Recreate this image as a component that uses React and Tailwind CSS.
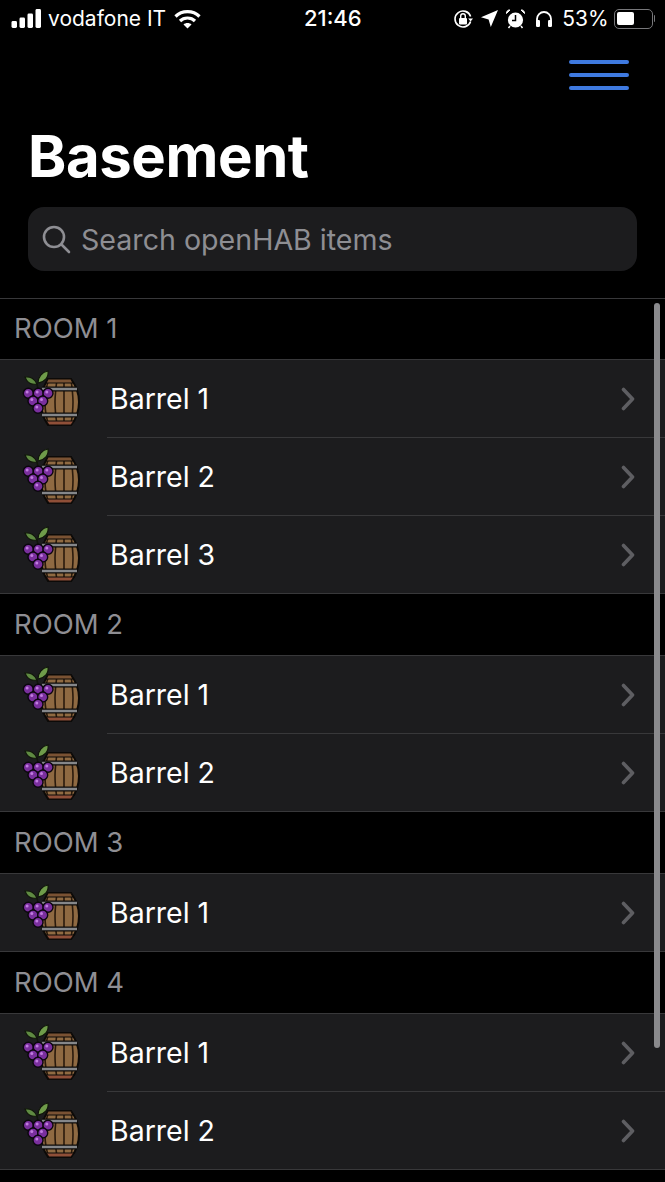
import React from "react";

const F = { fontFamily: "Inter, 'Liberation Sans', sans-serif" };

function BarrelIcon() {
  const grapes = [[7.3,24.3],[17.3,24.3],[27,24.3],[12,32],[21.7,32],[17,39.3]];
  return (
    <svg width="60" height="60" viewBox="0 0 60 60" className="shrink-0">
      <path d="M27 10 L50 10 C56 18 58 26 58 33 C58 41 56 49 50 56 L27 56 C22 49 20 41 20 33 C20 26 22 18 27 10 Z" fill="#8f6a42" stroke="#0c0a08" strokeWidth="2" />
      <path d="M28 10 C25 18 24 26 24 33 C24 41 25 49 28 56 M36 10 C35 18 34 26 34 33 C34 41 35 49 36 56 M43 10 C43 18 43 26 43 33 C43 41 43 49 43 56 M50 10 C51 18 52 26 52 33 C52 41 51 49 50 56" fill="none" stroke="#2a1a0c" strokeWidth="1.6" />
      <path d="M21 20 L56 20" stroke="#0c0a08" strokeWidth="5" />
      <path d="M21 20 L56 20" stroke="#85878a" strokeWidth="2.6" />
      <path d="M21 46 L56 46" stroke="#0c0a08" strokeWidth="5" />
      <path d="M21 46 L56 46" stroke="#85878a" strokeWidth="2.6" />
      <path d="M27 10 L50 10 L52 14 L25 14 Z" fill="#7a5233" stroke="#0c0a08" strokeWidth="1.2" />
      <path d="M25 52 L53 52 L50 56 L28 56 Z" fill="#8f4f38" stroke="#0c0a08" strokeWidth="1.2" />
      <path d="M4 8 C9 7 14 10 16 15 C11 16 6 14 4 8 Z" fill="#5f8a42" stroke="#10160a" strokeWidth="1.2" />
      <path d="M17 14 C17 8 21 3 27 2 C28 8 24 13 17 14 Z" fill="#6f9c4a" stroke="#10160a" strokeWidth="1.2" />
      <path d="M16 15 L17 20" stroke="#10160a" strokeWidth="1.5" />
      {grapes.map(([x, y], i) => (
        <g key={i}>
          <circle cx={x} cy={y} r="5" fill="#7a2f9e" stroke="#0b060e" strokeWidth="1.4" />
          <circle cx={x - 1.2} cy={y - 1.4} r="1.5" fill="#c07be0" />
        </g>
      ))}
    </svg>
  );
}

function Row({ name, last }) {
  return (
    <div className={`flex h-[78px] items-center bg-[#1c1c1e] pl-[21px] ${last ? "border-b border-[#38383a]" : ""}`}>
      <BarrelIcon />
      <div className={`ml-[26px] flex h-full flex-1 items-center justify-between pr-[30px] ${last ? "" : "border-b border-[#38383a]"}`}>
        <span className="ml-[3px] pt-[2px] text-[28.5px] leading-none text-white">{name}</span>
        <svg width="14" height="24" viewBox="0 0 14 24" fill="none">
          <path d="M2.5 2.5 L11.5 12 L2.5 21.5" stroke="#5e5e62" strokeWidth="3.6" strokeLinecap="round" strokeLinejoin="round" />
        </svg>
      </div>
    </div>
  );
}

function Section({ title, items, first }) {
  return (
    <div>
      <div className={`flex h-[62px] items-center border-b border-[#38383a] pl-[15px] text-[27.5px] leading-none text-[#8e8e93] ${first ? "border-t" : ""}`}>
        <span className="-ml-[1px]">{title}</span>
      </div>
      {items.map((n, i) => <Row key={n} name={n} last={i === items.length - 1} />)}
    </div>
  );
}

function StatusBar() {
  return (
    <div className="relative flex h-[36px] items-center justify-between pl-[11px] pr-[10px] pt-[1px] text-white">
      <div className="flex items-center">
        <svg width="31" height="19" viewBox="0 0 31 19" fill="white">
          <rect x="0.5" y="12" width="5.5" height="7" rx="1.4" />
          <rect x="8.5" y="8.5" width="5.5" height="10.5" rx="1.4" />
          <rect x="16.5" y="4.5" width="5.5" height="14.5" rx="1.4" />
          <rect x="24.5" y="0" width="5.5" height="19" rx="1.4" />
        </svg>
        <span className="ml-[6px] text-[21px] leading-none">vodafone IT</span>
        <svg className="ml-[8px]" width="27" height="20" viewBox="0 0 27 20" fill="none" stroke="white" strokeWidth="3.2">
          <path d="M1.5 7.5 C8 1 19 1 25.5 7.5" />
          <path d="M6 12 C10 8 17 8 21 12" />
          <path d="M13.5 19.5 L9.5 15.6 C11.5 13.6 15.5 13.6 17.5 15.6 Z" fill="white" stroke="none" />
        </svg>
      </div>
      <span className="absolute left-[304px] top-[7px] text-[22px] font-medium leading-none">21:46</span>
      <div className="flex items-center">
        <svg width="20" height="20" viewBox="0 0 20 20" fill="none">
          <path d="M17.6 7.5 A8 8 0 1 0 17.6 12.5" stroke="white" strokeWidth="1.6" />
          <path d="M15.2 9.4 L20 9.4 L17.6 12.6 Z" fill="white" />
          <rect x="6" y="9" width="8" height="6.5" rx="1" fill="white" />
          <path d="M7.7 9 V7 a2.3 2.3 0 0 1 4.6 0 V9" stroke="white" strokeWidth="1.4" />
        </svg>
        <svg className="ml-[8px]" width="17" height="17" viewBox="0 0 17 17" fill="white">
          <path d="M17 0 L9.8 17 L7.6 9.4 L0 7.2 Z" />
        </svg>
        <svg className="ml-[8px]" width="19" height="20" viewBox="0 0 19 20">
          <circle cx="9.5" cy="11" r="7.6" fill="white" />
          <path d="M9.5 6 V11.4 H6" stroke="black" strokeWidth="1.5" fill="none" />
          <path d="M0.5 4.5 L4 1 C2 0.6 0.4 2.2 0.5 4.5 Z M18.5 4.5 L15 1 C17 0.6 18.6 2.2 18.5 4.5 Z" fill="white" stroke="white" />
          <path d="M4 17 L2.5 19 M15 17 L16.5 19" stroke="white" strokeWidth="1.5" />
        </svg>
        <svg className="ml-[10px]" width="18" height="18" viewBox="0 0 18 18" fill="none">
          <path d="M2 12 V9 a7 7 0 0 1 14 0 V12" stroke="white" strokeWidth="1.8" />
          <rect x="1" y="10" width="4" height="7" rx="1.2" fill="white" />
          <rect x="13" y="10" width="4" height="7" rx="1.2" fill="white" />
        </svg>
        <span className="ml-[9px] text-[21px] leading-none">53%</span>
        <div className="ml-[5px] flex items-center">
          <div className="h-[20px] w-[39px] rounded-[5px] border-[1.5px] border-[#77777a] p-[2.5px]">
            <div className="h-full w-[17px] rounded-[2px] bg-white" />
          </div>
          <div className="ml-[1px] h-[7px] w-[1.5px] rounded-r-sm bg-[#77777a]" />
        </div>
      </div>
    </div>
  );
}

export default function App() {
  return (
    <div className="relative h-[1182px] w-[665px] overflow-hidden bg-black" style={F}>
      <StatusBar />
      <div className="flex justify-end pr-[36px] pt-[24px]">
        <div className="flex w-[60px] flex-col gap-[9px]">
          <div className="h-[4px] rounded-full bg-[#3f7ae0]" />
          <div className="h-[4px] rounded-full bg-[#3f7ae0]" />
          <div className="h-[4px] rounded-full bg-[#3f7ae0]" />
        </div>
      </div>
      <h1 className="pl-[28px] pt-[35px] text-[58px] font-bold leading-[62px] tracking-[-0.4px] text-white">Basement</h1>
      <div className="mx-[28px] mt-[20px] flex h-[64px] items-center rounded-[16px] bg-[#1c1c1e] pl-[14px]">
        <svg width="29" height="29" viewBox="0 0 29 29" fill="none" stroke="#8e8e93" strokeWidth="2.6" strokeLinecap="round">
          <circle cx="12" cy="12" r="10" />
          <path d="M19.5 19.5 L27 27" />
        </svg>
        <span className="ml-[10px] pt-[2px] text-[28.6px] leading-none text-[#8e8e93]">Search openHAB items</span>
      </div>
      <div className="mt-[27px]">
        <Section first title="ROOM 1" items={["Barrel 1", "Barrel 2", "Barrel 3"]} />
        <Section title="ROOM 2" items={["Barrel 1", "Barrel 2"]} />
        <Section title="ROOM 3" items={["Barrel 1"]} />
        <Section title="ROOM 4" items={["Barrel 1", "Barrel 2"]} />
      </div>
      <div className="absolute left-[654px] top-[303px] h-[745px] w-[6px] rounded-full bg-[#8a8a8d]" />
    </div>
  );
}
